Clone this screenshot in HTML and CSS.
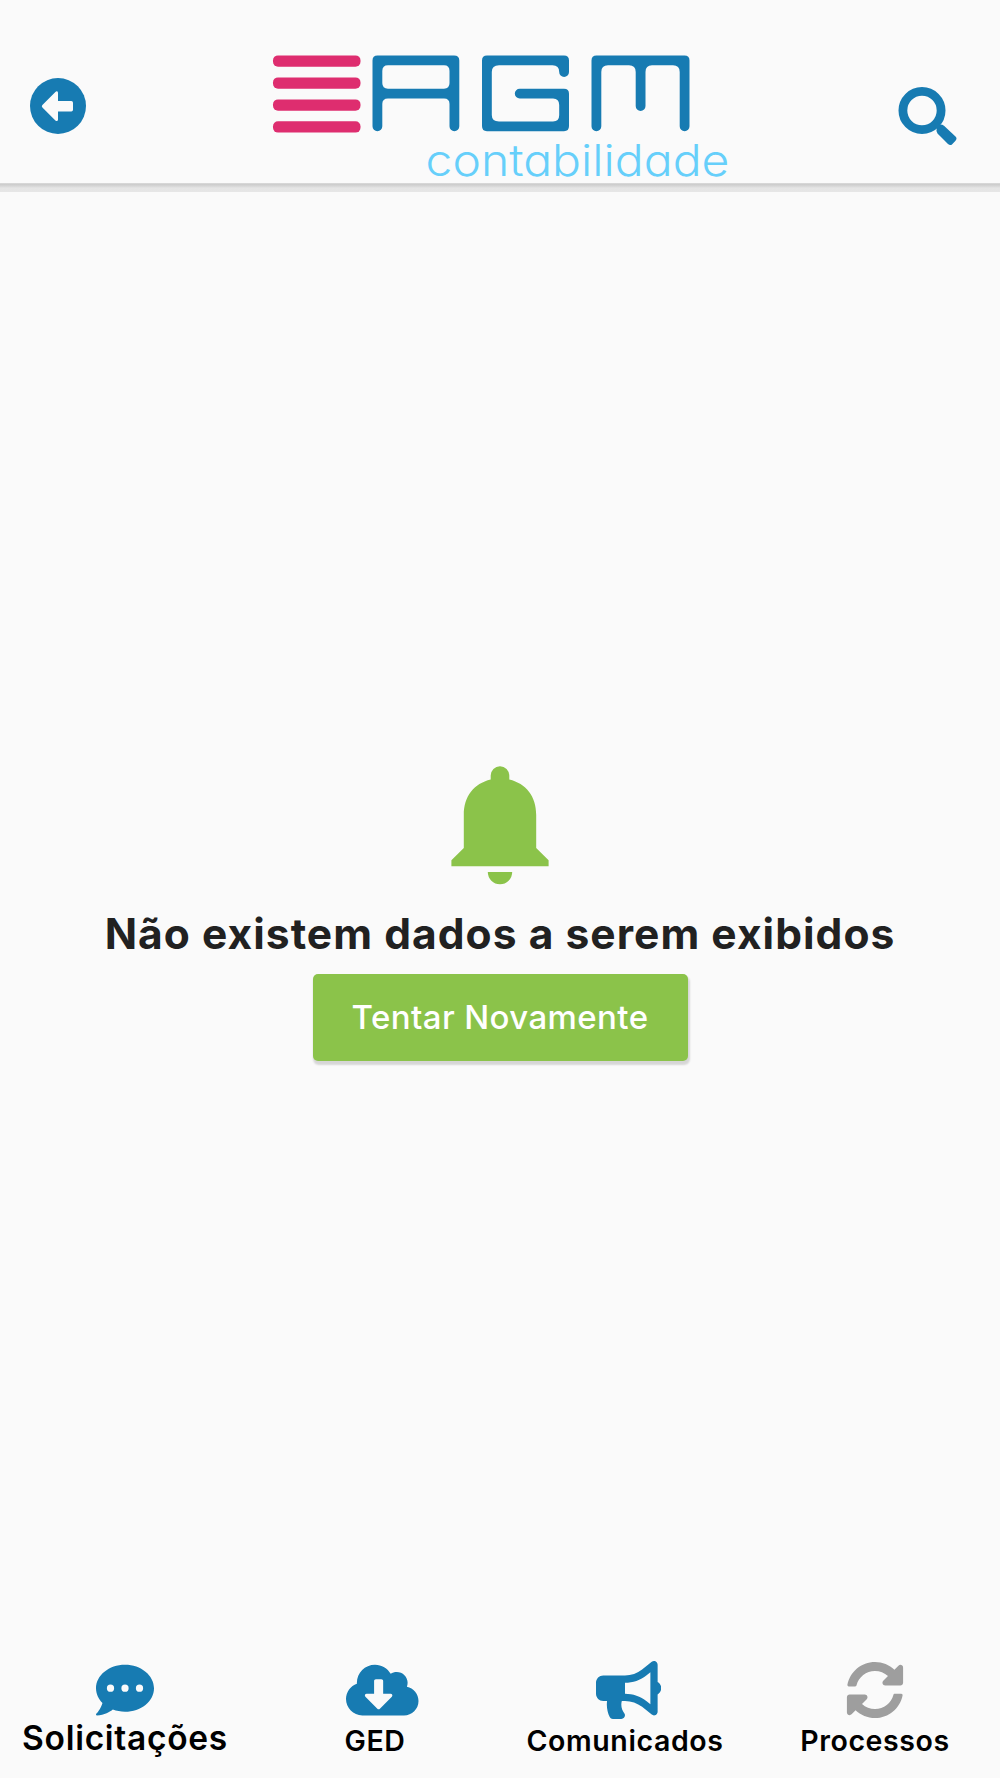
FILE: index.html
```html
<!DOCTYPE html>
<html lang="pt-BR">
<head>
<meta charset="utf-8">
<title>AGM Contabilidade</title>
<link rel="stylesheet" href="styles.css">
</head>
<body>
<div class="screen">
  <header class="topbar">
    <svg class="back" viewBox="0 0 56 56">
      <circle cx="28" cy="28" r="28"/>
      <path class="cutout" d="M12.4 27 25.4 14c1.200-1.200 2.600-.6 2.600.9V23H41.300Q43 23 43 24.700V31.800Q43 33.500 41.300 33.500H28V41.500c0 1.500-1.400 2.100-2.600.9L12.400 29.400Q11.200 28.200 12.400 27z"/>
    </svg>
    <svg class="logo" viewBox="270 50 464 142">
      <g class="bars">
        <rect x="273" y="55.400" width="87.500" height="11.300" rx="5"/>
        <rect x="273" y="77.400" width="87.500" height="11.300" rx="5"/>
        <rect x="273" y="99.400" width="87.500" height="11.300" rx="5"/>
        <rect x="273" y="121.300" width="87.500" height="11.300" rx="5"/>
      </g>
      <g class="letters">
        <path fill-rule="evenodd" d="M377.500 55.500H454Q459.300 55.500 459.300 60.500V126.300a4.900 4.900 0 0 1-9.800 0V104Q449.500 98.500 444 98.500H388Q382.300 98.500 382.300 104V126.300a4.900 4.900 0 0 1-9.800 0V60.500Q372.500 55.500 377.500 55.500zM388 65.300Q382.300 65.300 382.300 71V83Q382.300 88.700 388 88.700H444Q449.500 88.700 449.500 83V71Q449.500 65.300 444 65.300z"/>
        <path d="M487 55.500H564Q569 55.500 569 60.500V72a4.900 4.900 0 0 1-9.800 0Q559.200 65.300 552.500 65.300H499Q491.800 65.300 491.800 72V115Q491.800 121.500 499 121.500H553Q559.200 121.500 559.200 115V105Q559.200 98.500 553 98.500H519.700a4.900 4.900 0 0 1 0-9.800H564Q569 88.700 569 93.700V126Q569 131.200 564 131.200H487Q482 131.200 482 126V60.500Q482 55.500 487 55.500z"/>
        <path d="M596.500 55.500H684.500Q689.500 55.500 689.500 60.500V126.300a4.900 4.900 0 0 1-9.800 0V72Q679.700 65.300 673 65.300H652Q645.500 65.300 645.500 72V106a4.900 4.900 0 0 1-9.800 0V72Q635.700 65.300 629 65.300H608Q601.300 65.300 601.300 72V126.300a4.900 4.900 0 0 1-9.800 0V60.500Q591.500 55.500 596.500 55.500z"/>
      </g>
      <text class="tagline" x="425.500" y="175.500" textLength="304" lengthAdjust="spacingAndGlyphs">contabilidade</text>
    </svg>
    <svg class="search" viewBox="898 87 60 60">
      <circle cx="922" cy="110.500" r="19.100"/>
      <path d="M938.500 125.300Q941 123.500 944 125.800L955.500 136.500Q957.500 138.500 955.500 140.700L952.200 144.200Q950.200 146 948 144L937.500 133.500Q935.800 131.500 936.700 128.500L934 125.800 937.500 122z"/>
    </svg>
  </header>

  <main class="empty">
    <svg class="bell" viewBox="451 765 98 120">
      <path d="M490.700 779.500V775.500a9.300 9.300 0 0 1 18.600 0V779.500C526 783.500 536.200 796 536.200 815V848L548.600 860.300V866.200H451.400V860.300L463.800 848V815C463.800 796 474 783.500 490.700 779.500zM487.800 872H512.200a12.200 12.200 0 0 1-24.400 0z"/>
    </svg>
    <h1 class="message">Não existem dados a serem exibidos</h1>
    <button class="retry">Tentar Novamente</button>
  </main>

  <nav class="tabs">
    <a class="tab tab-main">
      <svg class="tab-icon" viewBox="0 0 512 512"><path fill-rule="evenodd" d="M256 32C114.600 32 0 125.100 0 240c0 49.600 21.400 95 57 130.700C44.500 421.100 2.700 466 2.200 466.500c-2.200 2.300-2.800 5.700-1.500 8.700S4.800 480 8 480c66.300 0 116-31.800 140.600-51.400 32.700 12.300 69 19.400 107.400 19.400 141.400 0 256-93.100 256-208S397.400 32 256 32zM96 240a32 32 0 1 0 64 0 32 32 0 1 0-64 0zM224 240a32 32 0 1 0 64 0 32 32 0 1 0-64 0zM352 240a32 32 0 1 0 64 0 32 32 0 1 0-64 0z"/></svg>
      <span class="label">Solicitações</span>
    </a>
    <a class="tab">
      <svg class="tab-icon wide" viewBox="0 0 640 512"><path d="M537.600 226.600c4.100-10.700 6.400-22.400 6.400-34.600 0-53-43-96-96-96-19.700 0-38.100 6-53.300 16.200C367 64.200 315.300 32 256 32c-88.400 0-160 71.600-160 160 0 2.700.1 5.400.2 8.100C40.200 219.800 0 273.200 0 336c0 79.500 64.500 144 144 144h368c70.700 0 128-57.300 128-128 0-61.900-44-113.600-102.400-125.400zm-132.900 88.700L299.300 420.700c-6.200 6.200-16.400 6.200-22.600 0L171.300 315.300c-10.100-10.100-2.900-27.300 11.300-27.300H248V176c0-8.800 7.200-16 16-16h48c8.800 0 16 7.200 16 16v112h65.400c14.200 0 21.400 17.200 11.300 27.300z"/></svg>
      <span class="label">GED</span>
    </a>
    <a class="tab">
      <svg class="tab-icon medium" viewBox="0 0 576 512"><path d="M576 240c0-23.630-12.950-44.040-32-55.120V32.010C544 23.260 537.020 0 512 0c-7.120 0-14.190 2.380-19.980 7.020l-85.030 68.030C364.280 109.190 310.660 128 256 128H64c-35.350 0-64 28.650-64 64v96c0 35.350 28.650 64 64 64h33.700c-1.390 10.480-2.180 21.140-2.180 32 0 39.770 9.260 77.350 25.560 110.940 5.190 10.690 16.520 17.060 28.400 17.060h74.280c26.050 0 41.690-29.840 25.900-50.560-16.400-21.520-26.150-48.360-26.150-77.440 0-11.110 1.620-21.790 4.410-32H256c54.660 0 108.280 18.810 150.980 52.950l85.030 68.030a32.023 32.023 0 0 0 19.980 7.020c24.920 0 32-22.780 32-32V295.130C563.050 284.040 576 263.630 576 240zm-96 141.420l-33.050-26.440C392.950 311.780 325.120 288 256 288v-96c69.120 0 136.950-23.780 190.950-66.980L480 98.580v282.840z"/></svg>
      <span class="label">Comunicados</span>
    </a>
    <a class="tab">
      <svg class="tab-icon muted" viewBox="0 0 512 512"><path d="M370.720 133.280C339.458 104.008 298.888 87.962 255.848 88c-77.458.068-144.328 53.178-162.791 126.850-1.344 5.363-6.122 9.150-11.651 9.150H24.103c-7.498 0-13.194-6.807-11.807-14.176C33.933 94.924 134.813 8 256 8c66.448 0 126.791 26.136 171.315 68.685L463.030 40.970C478.149 25.851 504 36.559 504 57.941V192c0 13.255-10.745 24-24 24H345.941c-21.382 0-32.090-25.851-16.971-40.971l41.750-41.749zM32 296h134.059c21.382 0 32.090 25.851 16.971 40.971l-41.750 41.750c31.262 29.273 71.835 45.319 114.876 45.280 77.418-.07 144.315-53.144 162.787-126.849 1.344-5.363 6.122-9.150 11.651-9.150h57.304c7.498 0 13.194 6.807 11.807 14.176C478.067 417.076 377.187 504 256 504c-66.448 0-126.791-26.136-171.315-68.685L48.970 471.030C33.851 486.149 8 475.441 8 454.059V320c0-13.255 10.745-24 24-24z"/></svg>
      <span class="label">Processos</span>
    </a>
  </nav>
</div>
</body>
</html>
```
FILE: styles.css
```css
* {
  box-sizing: border-box;
}

body {
  margin: 0;
  background: #fafafa;
  font-family: Inter, "Liberation Sans", sans-serif;
}

svg {
  display: block;
  flex: none;
  fill: #177bb2;
}

.screen {
  display: flex;
  flex-direction: column;
  height: 1778px;
  overflow: hidden;
}

.topbar {
  display: flex;
  align-items: flex-start;
  flex: none;
  height: 192px;
  padding: 50px 42px 0 30px;
  background: linear-gradient(#fafafa 183px, #e2e2e2 183px, #cbcbcb 184px, #d6d6d6 186px, #e5e5e5 188px, #e6e6e6 192px);
}

.back {
  width: 56px;
  height: 56px;
  margin-top: 28px;
}

.cutout {
  fill: #fafafa;
}

.logo {
  width: 464px;
  height: 142px;
  margin-left: 184px;
  overflow: visible;
}

.bars {
  fill: #de2d6f;
}

.tagline {
  fill: #66cffa;
  font-size: 44px;
  font-weight: 300;
  font-feature-settings: "cv11";
}

.search {
  width: 60px;
  height: 60px;
  margin: 37px 0 0 auto;
}

.search circle {
  fill: none;
  stroke: #177bb2;
  stroke-width: 8.8;
}

.empty {
  display: flex;
  flex: 1;
  flex-direction: column;
  align-items: center;
  padding-top: 573px;
}

.bell {
  width: 98px;
  height: 120px;
  fill: #8bc34a;
}

.message {
  margin: 23px 0 14px;
  color: #212121;
  font-size: 42.500px;
  font-weight: 650;
  line-height: 52px;
  letter-spacing: 1.05px;
  white-space: nowrap;
}

.retry {
  width: 375px;
  height: 87px;
  padding: 0;
  border: 0;
  border-radius: 5px;
  background: #8bc34a;
  box-shadow: 1px 3px 2px 1px rgba(0, 0, 0, 0.14);
  color: #fff;
  font: 500 33px/85px Inter, "Liberation Sans", sans-serif;
  letter-spacing: 0.4px;
}

.tabs {
  display: grid;
  flex: none;
  grid-template-columns: repeat(4, 1fr);
  height: 117px;
}

.tab {
  display: flex;
  flex-direction: column;
  color: #000;
  font-size: 28.500px;
  font-weight: 620;
  letter-spacing: 0.6px;
}

.tab-main {
  font-size: 33.500px;
  letter-spacing: 0.7px;
}

.tab-icon {
  width: 58px;
  height: 58px;
  margin-left: 96px;
}

.wide {
  width: 72.500px;
}

.medium {
  width: 65.250px;
}

.muted {
  fill: #9e9e9e;
}

.label {
  line-height: 44px;
  text-align: center;
}

.tab-main .label {
  line-height: 39px;
}
```
